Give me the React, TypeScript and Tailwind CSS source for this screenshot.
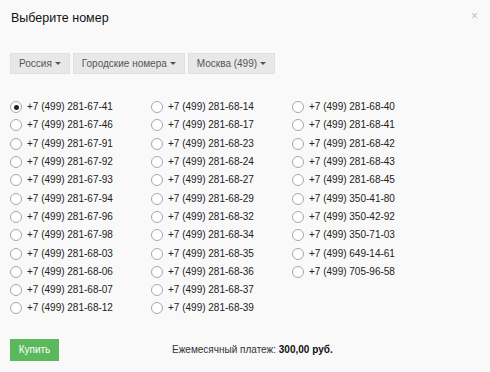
const columns = [
    [
        '+7 (499) 281-67-41',
        '+7 (499) 281-67-46',
        '+7 (499) 281-67-91',
        '+7 (499) 281-67-92',
        '+7 (499) 281-67-93',
        '+7 (499) 281-67-94',
        '+7 (499) 281-67-96',
        '+7 (499) 281-67-98',
        '+7 (499) 281-68-03',
        '+7 (499) 281-68-06',
        '+7 (499) 281-68-07',
        '+7 (499) 281-68-12',
    ],
    [
        '+7 (499) 281-68-14',
        '+7 (499) 281-68-17',
        '+7 (499) 281-68-23',
        '+7 (499) 281-68-24',
        '+7 (499) 281-68-27',
        '+7 (499) 281-68-29',
        '+7 (499) 281-68-32',
        '+7 (499) 281-68-34',
        '+7 (499) 281-68-35',
        '+7 (499) 281-68-36',
        '+7 (499) 281-68-37',
        '+7 (499) 281-68-39',
    ],
    [
        '+7 (499) 281-68-40',
        '+7 (499) 281-68-41',
        '+7 (499) 281-68-42',
        '+7 (499) 281-68-43',
        '+7 (499) 281-68-45',
        '+7 (499) 350-41-80',
        '+7 (499) 350-42-92',
        '+7 (499) 350-71-03',
        '+7 (499) 649-14-61',
        '+7 (499) 705-96-58',
    ],
];

const filters = ['Россия', 'Городские номера', 'Москва (499)'];

function Caret() {
    return <span className="ml-[3px] inline-block w-0 h-0 border-l-[3px] border-r-[3px] border-t-[3px] border-l-transparent border-r-transparent border-t-[#555]" />;
}

export default function App() {
    const selected = '+7 (499) 281-67-41';
    return (
        <div className="w-[490px] h-[372px] bg-[#f9f9f9] font-['Liberation_Sans',Arial,sans-serif] text-[#222] overflow-hidden">
            <div className="flex justify-between items-start pl-[11px] pr-[12px] pt-[9px]">
                <h1 className="text-[12.5px] leading-[18px] text-[#111]">Выберите номер</h1>
                <span className="text-[12px] leading-[12px] text-[#c0c0c0] mt-[1px]">×</span>
            </div>

            <div className="flex gap-[3px] pl-[10px] mt-[26px]">
                {filters.map((f) => (
                    <div key={f} className="h-[21px] flex items-center px-[8px] bg-[#e8e8e8] border border-[#e0e0e0] text-[10px] text-[#555]">
                        {f}
                        <Caret />
                    </div>
                ))}
            </div>

            <div className="flex pl-[10px] mt-[24px]">
                {columns.map((col, i) => (
                    <div key={i} className="w-[141px] flex flex-col">
                        {col.map((num) => (
                            <div key={num} className="h-[18.3px] flex items-center">
                                <span className="w-[12px] h-[12px] rounded-full border border-[#a8a8a8] bg-white flex items-center justify-center">
                                    {num === selected && <span className="w-[5px] h-[5px] rounded-full bg-[#222]" />}
                                </span>
                                <span className="ml-[5px] text-[10px] leading-none">{num}</span>
                            </div>
                        ))}
                    </div>
                ))}
            </div>

            <div className="flex items-center pl-[10px] mt-[21px]">
                <button className="h-[22px] w-[49px] bg-[#5cb85c] text-white text-[10px] flex items-center justify-center">Купить</button>
                <span className="ml-[113px] text-[10px] text-[#333]">
                    Ежемесячный платеж: <b className="text-[#111]">300,00 руб.</b>
                </span>
            </div>
        </div>
    );
}
